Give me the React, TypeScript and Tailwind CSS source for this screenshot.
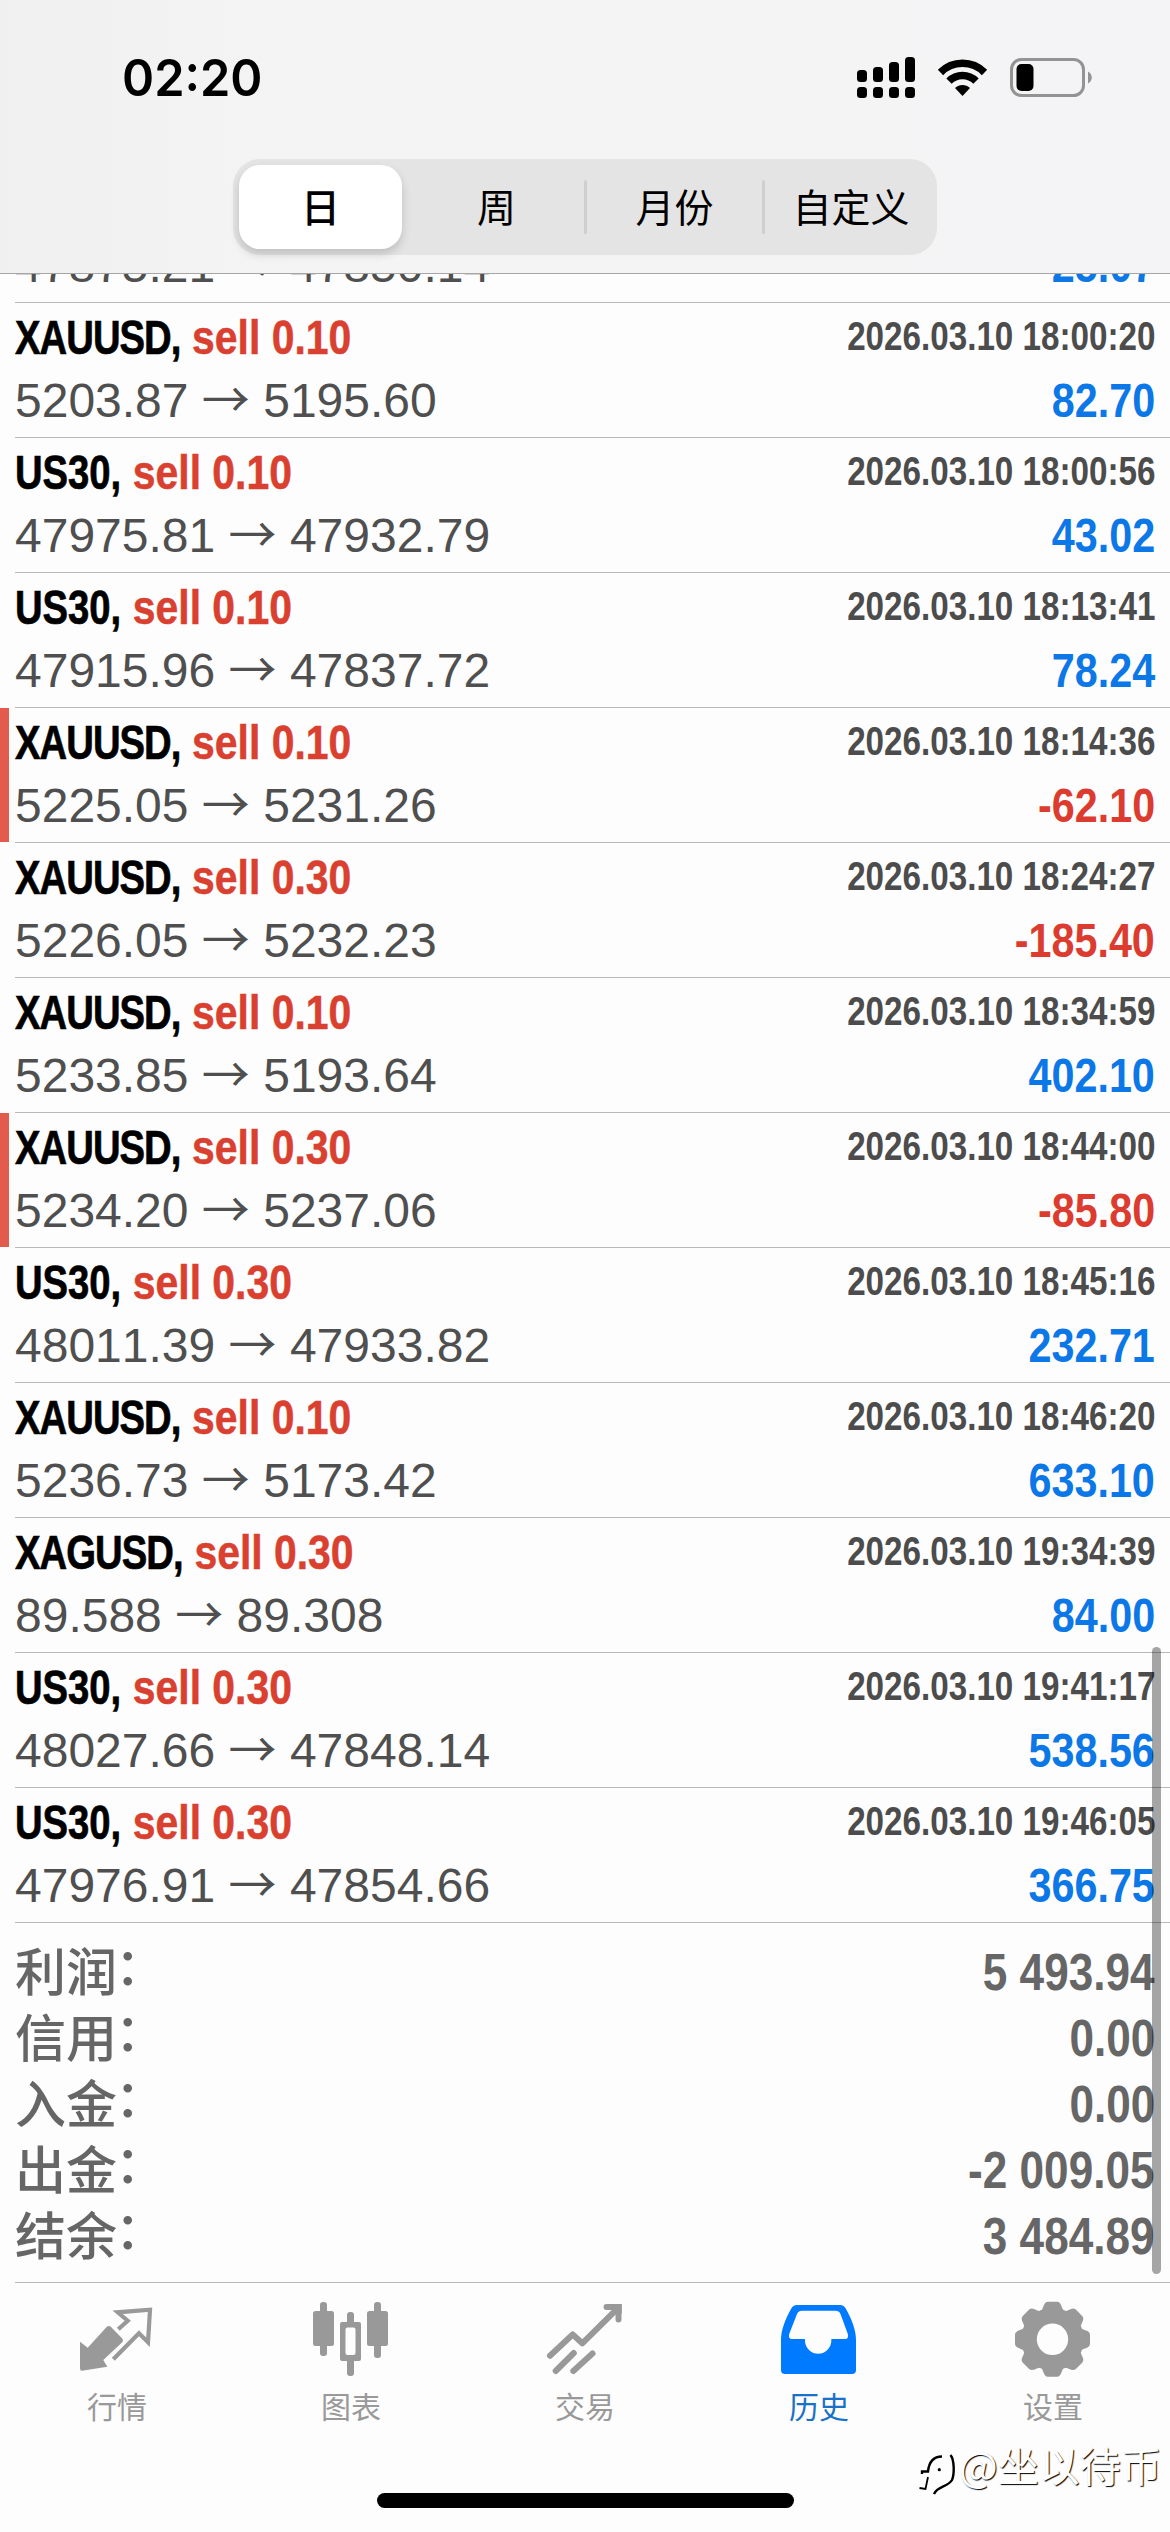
import React from "react";
import clsx from "clsx";

type Deal = {
  symbol: string;
  volume: string;
  open: string;
  close: string;
  time: string;
  profit: string;
  marked?: boolean;
};

const deals: Deal[] = [
  { symbol: "US30", volume: "0.10", open: "47875.21", close: "47850.14", time: "2026.03.10 17:58:12", profit: "25.07" },
  { symbol: "XAUUSD", volume: "0.10", open: "5203.87", close: "5195.60", time: "2026.03.10 18:00:20", profit: "82.70" },
  { symbol: "US30", volume: "0.10", open: "47975.81", close: "47932.79", time: "2026.03.10 18:00:56", profit: "43.02" },
  { symbol: "US30", volume: "0.10", open: "47915.96", close: "47837.72", time: "2026.03.10 18:13:41", profit: "78.24" },
  { symbol: "XAUUSD", volume: "0.10", open: "5225.05", close: "5231.26", time: "2026.03.10 18:14:36", profit: "-62.10", marked: true },
  { symbol: "XAUUSD", volume: "0.30", open: "5226.05", close: "5232.23", time: "2026.03.10 18:24:27", profit: "-185.40" },
  { symbol: "XAUUSD", volume: "0.10", open: "5233.85", close: "5193.64", time: "2026.03.10 18:34:59", profit: "402.10" },
  { symbol: "XAUUSD", volume: "0.30", open: "5234.20", close: "5237.06", time: "2026.03.10 18:44:00", profit: "-85.80", marked: true },
  { symbol: "US30", volume: "0.30", open: "48011.39", close: "47933.82", time: "2026.03.10 18:45:16", profit: "232.71" },
  { symbol: "XAUUSD", volume: "0.10", open: "5236.73", close: "5173.42", time: "2026.03.10 18:46:20", profit: "633.10" },
  { symbol: "XAGUSD", volume: "0.30", open: "89.588", close: "89.308", time: "2026.03.10 19:34:39", profit: "84.00" },
  { symbol: "US30", volume: "0.30", open: "48027.66", close: "47848.14", time: "2026.03.10 19:41:17", profit: "538.56" },
  { symbol: "US30", volume: "0.30", open: "47976.91", close: "47854.66", time: "2026.03.10 19:46:05", profit: "366.75" },
];

const totals = [
  { label: "利润", value: "5 493.94" },
  { label: "信用", value: "0.00" },
  { label: "入金", value: "0.00" },
  { label: "出金", value: "-2 009.05" },
  { label: "结余", value: "3 484.89" },
];

const StatusBar = () => (
  <div className="flex h-[159px] items-start justify-between pl-[122px] pr-[78px]">
    <div className="mt-[48px] origin-left scale-x-[0.955] font-['Inter',sans-serif] text-[51px] font-semibold leading-[60px] text-black">
      02:20
    </div>
    <div className="mt-[56px] flex">
      {/* dual sim signal */}
      <svg width="58" height="43" viewBox="0 0 58 43" fill="#000">
        <rect x="0" y="14" width="10" height="12" rx="3.5" />
        <rect x="16" y="11" width="10" height="15" rx="3.5" />
        <rect x="32" y="6" width="10" height="20" rx="3.5" />
        <rect x="48" y="1" width="10" height="25" rx="3.5" />
        <rect x="0" y="31" width="10" height="11" rx="3.5" />
        <rect x="16" y="31" width="10" height="11" rx="3.5" />
        <rect x="32" y="31" width="10" height="11" rx="3.5" />
        <rect x="48" y="31" width="10" height="11" rx="3.5" />
      </svg>
      <svg className="ml-[22px]" width="51" height="43" viewBox="0 0 51 43" fill="none" stroke="#000" strokeWidth="7.5">
        <path d="M3.5 16.5 A31 31 0 0 1 47.5 16.5" />
        <path d="M12 25.2 A19 19 0 0 1 39 25.2" />
        <path d="M18 32 C22 28 29 28 33 32 L25.5 40 Z" fill="#000" stroke="none" />
      </svg>
      <svg className="ml-[22px]" width="82" height="43" viewBox="0 0 82 43">
        <rect x="1.5" y="3.5" width="72" height="36" rx="10" fill="none" stroke="#939393" strokeWidth="3" />
        <rect x="6.5" y="8" width="17" height="27" rx="5" fill="#000" />
        <path d="M78 15.5 C83 18 83 25 78 27.5 Z" fill="#939393" />
      </svg>
    </div>
  </div>
);

const PeriodTabs = () => (
  <div className="mx-auto flex h-24 w-[704px] items-center rounded-[27px] bg-[#e4e4e4] p-1.5 text-[39px] leading-[56px] text-black">
    <div className="flex h-[84px] w-[163px] items-center justify-center rounded-[21px] bg-white font-medium shadow-[0_5px_10px_rgba(0,0,0,0.16)]">
      <span className="-mt-1">日</span>
    </div>
    <div className="ml-[7px] flex w-[175px] justify-center">
      <span className="-mt-1">周</span>
    </div>
    <div className="h-[54px] w-[3px] rounded bg-[#cfcfcf]" />
    <div className="flex w-[175px] justify-center">
      <span className="-mt-1">月份</span>
    </div>
    <div className="h-[54px] w-[3px] rounded bg-[#cfcfcf]" />
    <div className="-mr-1.5 flex flex-1 justify-center">
      <span className="-mt-1">自定义</span>
    </div>
  </div>
);

const DealRow = ({ deal }: { deal: Deal }) => {
  const loss = deal.profit.startsWith("-");

  return (
    <li className="flex h-[135px] whitespace-nowrap font-['Liberation_Sans',sans-serif]">
      <div className={clsx("mr-1.5 h-[134px] w-[9px]", deal.marked && "bg-[#e25b4d]")} />
      <div className="flex flex-1 justify-between border-b border-[#b9b9b9] pr-[15px]">
        <div className="flex flex-col items-start gap-[14px] pt-[9px]">
          <div className="h-[50px] origin-left scale-x-[0.78] text-[49px] font-bold leading-[50px] text-black">
            <span
              className={clsx(
                "[-webkit-text-stroke:0.7px_#000]",
                deal.symbol.length > 4 && "tracking-[-1.2px]"
              )}
            >
              {deal.symbol},
            </span>
            <span className="ml-[15px] inline-block origin-left scale-x-[1.07] text-[#d9402f] [-webkit-text-stroke:0.5px_#d9402f]">
              sell {deal.volume}
            </span>
          </div>
          <div className="h-[50px] text-[48px] leading-[50px] text-[#4f4f4f] [font-kerning:none]">
            {deal.open} <span className="font-['Noto_Sans_CJK_SC',sans-serif] leading-[0]">→</span> {deal.close}
          </div>
        </div>
        <div className="flex flex-col items-end gap-[15px] pt-2">
          <div className="h-[50px] origin-right scale-x-[0.83] text-[40px] font-bold leading-[50px] text-[#4c4c4c]">
            {deal.time}
          </div>
          <div
            className={clsx(
              "h-[50px] origin-right scale-x-[0.86] text-[48px] font-bold leading-[50px]",
              loss ? "text-[#dc3c2f]" : "text-[#0c77e6]"
            )}
          >
            {deal.profit}
          </div>
        </div>
      </div>
    </li>
  );
};

const QuotesIcon = () => (
  <svg width="78" height="78" viewBox="0 0 78 78">
    <path
      d="M2 41.7 L9.7 47.7 L28.6 27 Q31 25 33 27 L44 38.2 Q46 40.5 44 42.5 L25.3 60 L29.3 66.7 L4 70.7 Q2 70.7 2 68.5 Z"
      fill="currentColor"
    />
    <path
      d="M40.3 29.3 L49.7 20.7 L39.7 12.3 L72 9.7 L70 42.3 L61 33.3 L35.3 59.3"
      fill="none"
      stroke="currentColor"
      strokeWidth="4.2"
    />
  </svg>
);

const ChartIcon = () => (
  <svg width="78" height="78" viewBox="0 0 78 78" fill="currentColor">
    <rect x="8" y="2" width="7" height="54" rx="3" />
    <rect x="1" y="11" width="21" height="35" rx="2.5" />
    <rect x="62" y="2" width="7" height="56" rx="3" />
    <rect x="55" y="11" width="21" height="35" rx="2.5" />
    <rect x="35" y="12" width="7" height="14" rx="3" />
    <rect x="35" y="58" width="7" height="18" rx="3" />
    <path
      fillRule="evenodd"
      d="M30 22 H47 Q49 22 49 24 V59 Q49 61 47 61 H30 Q28 61 28 59 V24 Q28 22 30 22 Z M35.5 27.5 Q33.5 27.5 33.5 29.5 V53 Q33.5 55 35.5 55 H41.5 Q43.5 55 43.5 53 V29.5 Q43.5 27.5 41.5 27.5 Z"
    />
  </svg>
);

const TradeIcon = () => (
  <svg width="78" height="78" viewBox="0 0 78 78" fill="none" stroke="currentColor" strokeWidth="6" strokeLinecap="round">
    <path d="M4 55.7 L26.7 34.5 L36.3 43.3 L71 9" strokeLinejoin="round" />
    <path d="M60.5 7 H72.5 V19.5" />
    <path d="M66 4 H75.8 V14 Z" fill="currentColor" stroke="none" />
    <path d="M9.7 71 L27.8 53" />
    <path d="M27.3 71 L46.5 53.5" />
  </svg>
);

const HistoryIcon = () => (
  <svg width="78" height="78" viewBox="0 0 78 78" fill="currentColor">
    <path
      fillRule="evenodd"
      d="M17 5 H60 Q64 5 66 9 C72 20 76 30 76 40 V70 Q76 74 72 74 H5 Q1 74 1 70 V40 C1 30 5 20 11 9 Q13 5 17 5 Z M22 10.7 Q18.5 10.7 17 14 L9.2 34 Q8 39 12 39 H25 V41.5 A13.2 13.5 0 0 0 51.3 41.5 V39 H65 Q69 39 67.8 34 L60.5 14 Q59 10.7 55.5 10.7 Z"
    />
  </svg>
);

const SettingsIcon = () => (
  <svg width="78" height="78" viewBox="0 0 78 78">
    <g transform="translate(38.5 39.3)" fill="currentColor">
      <circle r="23.5" fill="none" stroke="currentColor" strokeWidth="15.6" />
      {[0, 45, 90, 135, 180, 225, 270, 315].map((angle) => (
        <path
          key={angle}
          transform={`rotate(${angle})`}
          d="M-12.5 -27 C-8.5 -30 -9.5 -37.5 -4.5 -37.5 H4.5 C9.5 -37.5 8.5 -30 12.5 -27 Z"
        />
      ))}
    </g>
  </svg>
);

const navItems = [
  { label: "行情", icon: QuotesIcon },
  { label: "图表", icon: ChartIcon },
  { label: "交易", icon: TradeIcon },
  { label: "历史", icon: HistoryIcon, active: true },
  { label: "设置", icon: SettingsIcon },
];

const TabBar = () => (
  <nav className="h-[250px]">
    <div className="ml-[15px] h-px bg-[#b9b9b9]" />
    <div className="flex pt-[17px]">
      {navItems.map(({ label, icon: Icon, active }) => (
        <div
          key={label}
          className={clsx("flex w-[234px] flex-col items-center", active ? "text-[#007aff]" : "text-[#999999]")}
        >
          <Icon />
          <span
            className={clsx("mt-[5px] text-[30px] leading-[44px]", active ? "text-[#1a71c8]" : "text-[#999999]")}
          >
            {label}
          </span>
        </div>
      ))}
    </div>
    <div className="mx-auto mt-[66px] h-[15px] w-[417px] rounded-full bg-black" />
  </nav>
);

const Watermark = () => (
  <div className="absolute left-[917px] top-[2432px] flex items-center">
    <svg className="mt-2.5" width="42" height="54" viewBox="0 -4 42 54" fill="none" stroke="#000" strokeWidth="2.4">
      <path d="M5 28 V25.5 H11 C12 16 17 10.5 25 10.5" />
      <path d="M11 31 L8.5 43 L2.5 42" strokeWidth="1.8" />
      <circle cx="22.3" cy="23.7" r="1.6" fill="#000" stroke="none" />
      <path d="M33.5 9 C37.5 14 37.5 28 35 34 C31 41 20 40 17 48" />
    </svg>
    <span className="whitespace-nowrap text-[41px] leading-[60px] text-white [text-shadow:1px_1px_1px_#000]">
      @坐以待币
    </span>
  </div>
);

const App = () => {
  return (
    <div className="relative flex h-[2532px] w-[1170px] flex-col overflow-hidden bg-[#fdfdfd] font-['Noto_Sans_CJK_SC',sans-serif]">
      <header className="z-10 h-[274px] shrink-0 border-b border-[#a6a6a6] bg-linear-to-r from-[#f0f0f0] via-[#f4f4f4] via-25% to-[#f4f4f6]">
        <StatusBar />
        <PeriodTabs />
      </header>

      <main className="flex-1 overflow-hidden">
        <ul className="-mt-[106px]">
          {deals.map((deal) => (
            <DealRow key={deal.time} deal={deal} />
          ))}
        </ul>
        <div className="pl-[15px] pr-[15px] pt-[17px]">
          {totals.map((row) => (
            <div key={row.label} className="flex h-[66px] justify-between text-[#666666]">
              <span className="-mt-1 text-[51px] font-medium leading-[66px]">
                {row.label}
                <span className="-ml-0.5 inline-block -translate-y-[6px]">：</span>
              </span>
              <span className="origin-right scale-x-[0.865] font-['Liberation_Sans',sans-serif] text-[51px] font-bold leading-[66px]">
                {row.value}
              </span>
            </div>
          ))}
        </div>
      </main>

      <TabBar />

      {/* scroll indicator */}
      <div className="absolute left-[1152px] top-[1647px] h-[627px] w-[9px] rounded-full bg-black/35" />
      <Watermark />
    </div>
  );
};

export default App;
